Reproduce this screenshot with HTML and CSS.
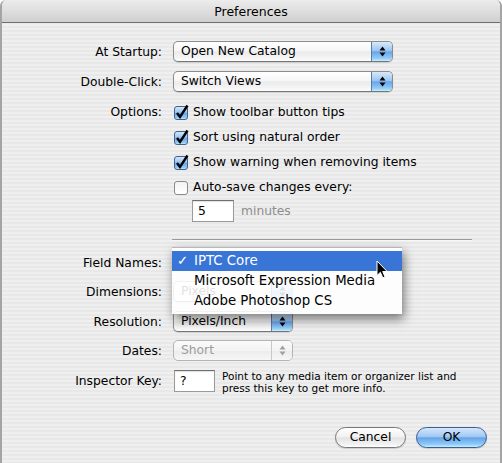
FILE: index.html
```html
<!DOCTYPE html>
<html>
<head>
<meta charset="utf-8">
<link rel="stylesheet" href="styles.css">
</head>
<body>
<svg class="defs" width="0" height="0" aria-hidden="true">
  <defs>
    <linearGradient id="gBlue" x1="0" y1="0" x2="0" y2="1">
      <stop offset="0" stop-color="#d8e9fb"/>
      <stop offset="0.45" stop-color="#9cc5f0"/>
      <stop offset="0.52" stop-color="#69a5ea"/>
      <stop offset="0.85" stop-color="#8fcbf7"/>
      <stop offset="1" stop-color="#c8effd"/>
    </linearGradient>
    <linearGradient id="gWhite" x1="0" y1="0" x2="0" y2="1">
      <stop offset="0" stop-color="#f2f2f2"/>
      <stop offset="0.5" stop-color="#fafafa"/>
      <stop offset="1" stop-color="#ffffff"/>
    </linearGradient>
  </defs>
</svg>
<div class="window">
  <div class="titlebar">Preferences</div>
  <div class="content">
    <div class="row r-first">
      <span class="lbl">At Startup:</span>
      <div class="popup w-wide"><span class="pv">Open New Catalog</span><span class="pa"><svg width="7" height="11" viewBox="0 0 7 11"><polygon points="0.5,4.5 3.5,0.5 6.5,4.5"/><polygon points="0.5,6.5 3.5,10.5 6.5,6.5"/></svg></span></div>
    </div>
    <div class="row r-pop2">
      <span class="lbl">Double-Click:</span>
      <div class="popup w-wide"><span class="pv">Switch Views</span><span class="pa"><svg width="7" height="11" viewBox="0 0 7 11"><polygon points="0.5,4.5 3.5,0.5 6.5,4.5"/><polygon points="0.5,6.5 3.5,10.5 6.5,6.5"/></svg></span></div>
    </div>
    <div class="options">
      <div class="row r-cb">
        <span class="lbl">Options:</span>
        <svg class="cb" width="16" height="16" viewBox="0 0 16 16"><rect x="0.5" y="2.5" width="13" height="13" rx="2.5" fill="url(#gBlue)" stroke="#45628f"/><path d="M3 9 L6 13 L13.5 1.5" fill="none" stroke="#000" stroke-width="2.4"/></svg>
        <span class="cbt">Show toolbar button tips</span>
      </div>
      <div class="row r-cb">
        <span class="lbl"></span>
        <svg class="cb" width="16" height="16" viewBox="0 0 16 16"><rect x="0.5" y="2.5" width="13" height="13" rx="2.5" fill="url(#gBlue)" stroke="#45628f"/><path d="M3 9 L6 13 L13.5 1.5" fill="none" stroke="#000" stroke-width="2.4"/></svg>
        <span class="cbt">Sort using natural order</span>
      </div>
      <div class="row r-cb">
        <span class="lbl"></span>
        <svg class="cb" width="16" height="16" viewBox="0 0 16 16"><rect x="0.5" y="2.5" width="13" height="13" rx="2.5" fill="url(#gBlue)" stroke="#45628f"/><path d="M3 9 L6 13 L13.5 1.5" fill="none" stroke="#000" stroke-width="2.4"/></svg>
        <span class="cbt">Show warning when removing items</span>
      </div>
      <div class="row r-cb">
        <span class="lbl"></span>
        <svg class="cb" width="16" height="16" viewBox="0 0 16 16"><rect x="0.5" y="2.5" width="13" height="13" rx="2.5" fill="url(#gWhite)" stroke="#8a8a8a"/></svg>
        <span class="cbt">Auto-save changes every:</span>
      </div>
      <div class="row r-min">
        <span class="lbl"></span>
        <span class="field f-min">5</span>
        <span class="dim">minutes</span>
      </div>
    </div>
    <div class="sep"></div>
    <div class="row r-fn">
      <span class="lbl">Field Names:</span>
      <div class="popup w-narrow covered"></div>
    </div>
    <div class="row r-pop">
      <span class="lbl">Dimensions:</span>
      <div class="popup w-narrow"><span class="pv">Pixels</span><span class="pa"><svg width="7" height="11" viewBox="0 0 7 11"><polygon points="0.5,4.5 3.5,0.5 6.5,4.5"/><polygon points="0.5,6.5 3.5,10.5 6.5,6.5"/></svg></span></div>
    </div>
    <div class="row r-pop r-res">
      <span class="lbl">Resolution:</span>
      <div class="popup w-narrow"><span class="pv">Pixels/Inch</span><span class="pa"><svg width="7" height="11" viewBox="0 0 7 11"><polygon points="0.5,4.5 3.5,0.5 6.5,4.5"/><polygon points="0.5,6.5 3.5,10.5 6.5,6.5"/></svg></span></div>
    </div>
    <div class="row r-pop">
      <span class="lbl">Dates:</span>
      <div class="popup w-narrow disabled"><span class="pv">Short</span><span class="pa"><svg width="7" height="11" viewBox="0 0 7 11"><polygon points="0.5,4.5 3.5,0.5 6.5,4.5"/><polygon points="0.5,6.5 3.5,10.5 6.5,6.5"/></svg></span></div>
    </div>
    <div class="row r-key">
      <span class="lbl">Inspector Key:</span>
      <span class="field f-key">?</span>
      <span class="help">Point to any media item or organizer list and<br>press this key to get more info.</span>
    </div>
    <div class="buttons">
      <span class="btn">Cancel</span>
      <span class="btn default">OK</span>
    </div>
  </div>
  <div class="menu">
    <div class="mi sel"><span class="mc">✓</span>IPTC Core</div>
    <div class="mi"><span class="mc"></span>Microsoft Expression Media</div>
    <div class="mi"><span class="mc"></span>Adobe Photoshop CS</div>
  </div>
  <svg class="cursor" width="13" height="19" viewBox="0 0 13 19"><path d="M1 1 L1 15.5 L4.4 12.3 L6.8 17.8 L9 16.9 L6.7 11.5 L11.2 11.5 Z" fill="#000" stroke="#fff" stroke-width="1" stroke-linejoin="round"/></svg>
</div>
</body>
</html>
```

FILE: styles.css
```css
html, body {
  margin: 0;
  padding: 0;
  background: #ffffff;
}
body {
  width: 502px;
  height: 463px;
  overflow: hidden;
  font-family: "DejaVu Sans", "Liberation Sans", sans-serif;
  font-size: 12.3px;
  color: #000;
}
.defs {
  position: absolute;
}
.window {
  position: relative;
  width: 502px;
  height: 463px;
  box-sizing: border-box;
  border-left: 2px solid #a4a4a4;
  border-right: 2px solid #a4a4a4;
  border-radius: 6px 6px 0 0;
  background: repeating-linear-gradient(to bottom, #efefef 0px, #efefef 2px, #e8e8e8 2px, #e8e8e8 4px);
  overflow: hidden;
}
.titlebar {
  height: 22px;
  line-height: 23px;
  text-align: center;
  font-size: 12.5px;
  border-bottom: 1px solid #6f6f6f;
  background: linear-gradient(to bottom, #ececec 0%, #dedede 50%, #cfcfcf 100%);
  border-radius: 5px 5px 0 0;
}
.content {
  padding-top: 14px;
}
.row {
  display: flex;
  align-items: center;
}
.lbl {
  width: 160px;
  margin-right: 11px;
  text-align: right;
  flex: none;
}
.r-first { height: 29px; }
.r-pop2 { height: 29px; margin-top: 1px; }
.options { margin-top: 3px; }
.r-cb { height: 25px; }
.r-min { height: 24px; }
.r-fn { height: 29px; margin-top: 7px; }
.r-pop { height: 29px; }
.r-res { margin-top: 1px; }
.r-key { height: 30px; margin-top: 1px; }

.popup {
  display: flex;
  box-sizing: border-box;
  height: 21px;
  border: 1px solid #8c8c8c;
  border-bottom-color: #767676;
  border-radius: 5px;
  background: linear-gradient(to bottom, #ffffff 0%, #f6f6f6 45%, #ebebeb 52%, #f3f3f3 80%, #fdfdfd 100%);
  box-shadow: 0 1px 1px rgba(0,0,0,0.12);
  overflow: hidden;
}
.popup.covered {
  visibility: hidden;
}
.w-wide { width: 220px; }
.w-narrow { width: 120px; }
.pv {
  flex: 1;
  padding-left: 7px;
  line-height: 19px;
  white-space: nowrap;
}
.pa {
  width: 20px;
  display: flex;
  align-items: center;
  justify-content: center;
  border-left: 1px solid #5b7bab;
  background: linear-gradient(to bottom, #d8e9fb 0%, #9cc5f0 45%, #69a5ea 52%, #8fcbf7 85%, #c8effd 100%);
}
.pa svg polygon { fill: #000; }
.popup.disabled {
  border-color: #b4b4b4;
  box-shadow: none;
  background: linear-gradient(to bottom, #fbfbfb 0%, #f3f3f3 50%, #ececec 52%, #f6f6f6 100%);
}
.popup.disabled .pv { color: #9c9c9c; }
.popup.disabled .pa {
  border-left-color: #c8c8c8;
  background: linear-gradient(to bottom, #fbfbfb 0%, #f3f3f3 50%, #ececec 52%, #f6f6f6 100%);
}
.popup.disabled .pa svg polygon { fill: #a0a0a0; }

.cb {
  margin-left: 1px;
  flex: none;
}
.cbt {
  margin-left: 3px;
  white-space: nowrap;
}
.field {
  box-sizing: border-box;
  height: 22px;
  width: 42px;
  background: #fff;
  border: 1px solid #9a9a9a;
  border-top-color: #6e6e6e;
  box-shadow: inset 0 1px 1px rgba(0,0,0,0.12);
  line-height: 20px;
  padding-left: 5px;
}
.f-min { margin-left: 19px; }
.dim {
  color: #8e8e8e;
  margin-left: 7px;
}
.f-key { margin-left: 1px; width: 41px; }
.help {
  margin-left: 7px;
  font-size: 10.5px;
  line-height: 12px;
  padding-top: 2px;
}
.sep {
  margin-top: 16px;
  margin-left: 170px;
  width: 300px;
  height: 1px;
  background: #9a9a9a;
  border-bottom: 1px solid #f8f8f8;
}
.buttons {
  display: flex;
  justify-content: flex-end;
  gap: 10px;
  margin-top: 31px;
  padding-right: 13px;
}
.btn {
  box-sizing: border-box;
  width: 71px;
  height: 21px;
  line-height: 19px;
  text-align: center;
  border: 1px solid #777;
  border-radius: 11px;
  background: linear-gradient(to bottom, #fefefe 0%, #f2f2f2 45%, #e3e3e3 52%, #f1f1f1 85%, #ffffff 100%);
  box-shadow: 0 1px 1px rgba(0,0,0,0.15);
}
.btn.default {
  border-color: #3d5c94;
  background: linear-gradient(to bottom, #d3e7fb 0%, #a0c8f1 45%, #66a3ea 52%, #8ccaf7 85%, #c6effe 100%);
}

.menu {
  position: absolute;
  left: 170px;
  top: 247px;
  width: 230px;
  box-sizing: border-box;
  padding: 3px 0 3px;
  background: rgba(255,255,255,0.88);
  border-top: 1px solid #b8b8b8;
  box-shadow: 2px 5px 10px rgba(0,0,0,0.5);
  font-size: 13.3px;
}
.mi {
  height: 20px;
  line-height: 20px;
  display: flex;
  white-space: nowrap;
}
.mi.sel {
  background: #3875d7;
  color: #fff;
}
.mc {
  width: 22px;
  padding-left: 5px;
  box-sizing: border-box;
  flex: none;
}
.cursor {
  position: absolute;
  left: 374px;
  top: 260px;
}
```
